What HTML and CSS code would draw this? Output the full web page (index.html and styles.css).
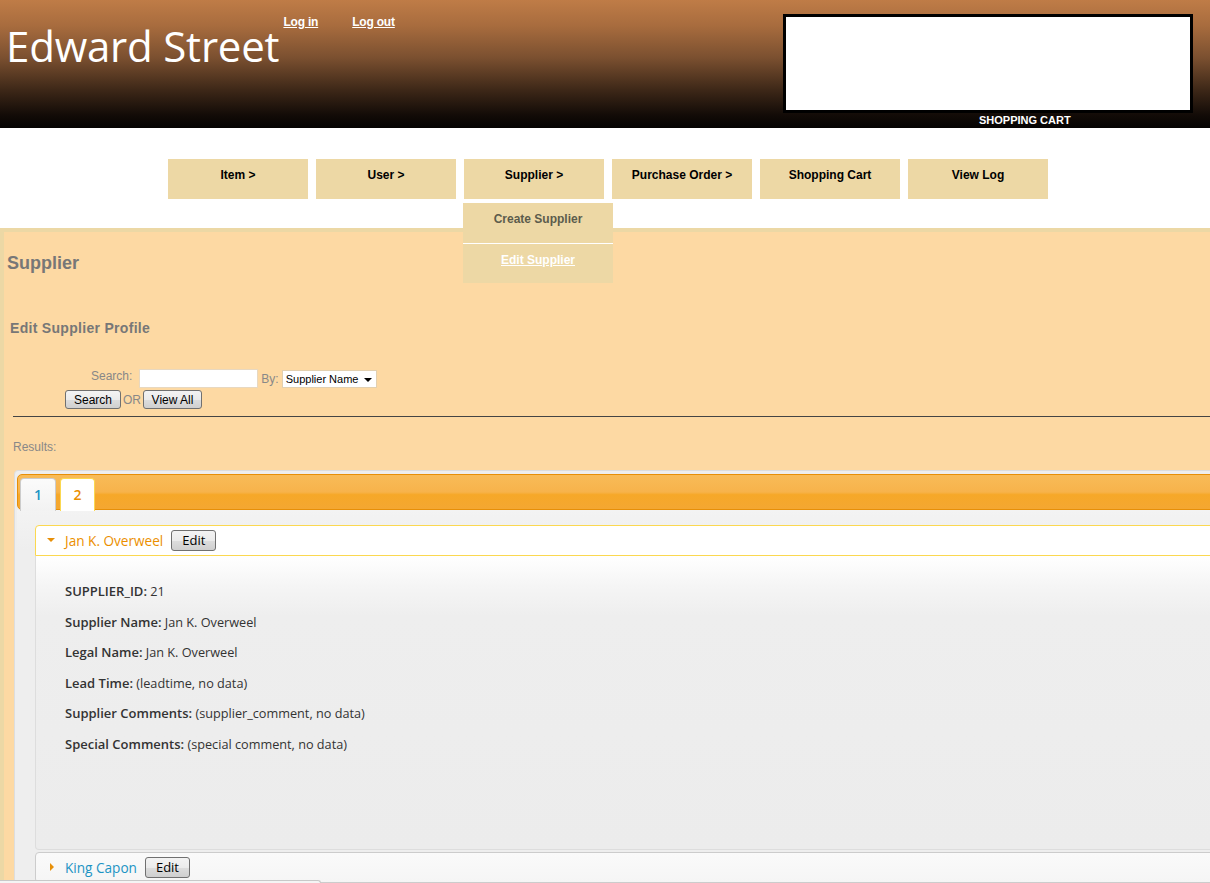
FILE: index.html
```html
<!DOCTYPE html>
<html>
<head>
<meta charset="utf-8">
<title>Edward Street - Edit Supplier</title>
<link rel="stylesheet" href="styles.css">
</head>
<body>
<header class="header">
  <div class="brand">
    <h1 class="title">Edward Street</h1>
    <div class="auth">
      <a href="#" class="auth-link">Log in</a>
      <a href="#" class="auth-link">Log out</a>
    </div>
  </div>
  <div class="cart">
    <div class="cart-box"></div>
    <div class="cart-label">SHOPPING CART</div>
  </div>
</header>

<nav class="menu">
  <div class="menu-item">Item &gt;</div>
  <div class="menu-item">User &gt;</div>
  <div class="menu-item has-sub">Supplier &gt;
    <div class="submenu">
      <div class="submenu-item">Create Supplier</div>
      <div class="submenu-item current"><a href="#">Edit Supplier</a></div>
    </div>
  </div>
  <div class="menu-item">Purchase Order &gt;</div>
  <div class="menu-item">Shopping Cart</div>
  <div class="menu-item">View Log</div>
</nav>

<main class="content">
  <h2 class="page-title">Supplier</h2>
  <h3 class="section-title">Edit Supplier Profile</h3>

  <form class="search">
    <div class="search-row">
      <label class="lbl lbl-search">Search:</label>
      <input type="text" class="search-input">
      <span class="lbl lbl-by">By:</span>
      <div class="select">Supplier Name<span class="select-arrow"></span></div>
    </div>
    <div class="search-row buttons">
      <button type="button" class="btn btn-search">Search</button>
      <span class="lbl lbl-or">OR</span>
      <button type="button" class="btn btn-all">View All</button>
    </div>
  </form>

  <div class="rule"></div>
  <div class="results">Results:</div>

  <div class="tabs">
    <div class="tabs-nav">
      <div class="tab">1</div>
      <div class="tab active">2</div>
    </div>
    <div class="tab-panel">
      <div class="acc-header open">
        <span class="acc-icon down"></span>
        <span class="acc-name">Jan K. Overweel</span>
        <button type="button" class="btn btn-edit">Edit</button>
      </div>
      <div class="acc-content">
        <p><b>SUPPLIER_ID:</b> 21</p>
        <p><b>Supplier Name:</b> Jan K. Overweel</p>
        <p><b>Legal Name:</b> Jan K. Overweel</p>
        <p><b>Lead Time:</b> (leadtime, no data)</p>
        <p><b>Supplier Comments:</b> (supplier_comment, no data)</p>
        <p><b>Special Comments:</b> (special comment, no data)</p>
      </div>
      <div class="acc-header">
        <span class="acc-icon right"></span>
        <span class="acc-name">King Capon</span>
        <button type="button" class="btn btn-edit">Edit</button>
      </div>
    </div>
  </div>
</main>
<div class="status-bubble"></div>
</body>
</html>
```
FILE: styles.css
```css
html, body {
  margin: 0;
  padding: 0;
  overflow: hidden;
  background: #fff;
  font-family: "Liberation Sans", Arial, sans-serif;
}

/* ---------- header ---------- */
.header {
  height: 128px;
  display: flex;
  justify-content: space-between;
  align-items: flex-start;
  background: linear-gradient(to bottom, #bf7c47 0%, #a86c3e 20%, #7b5030 45%, #3e2818 70%, #120b07 90%, #050302 100%);
}
.brand {
  display: flex;
  align-items: flex-start;
  padding-left: 6px;
}
.title {
  margin: 18px 0 0;
  font-family: "Open Sans", sans-serif;
  font-weight: 400;
  font-size: 42px;
  line-height: 56px;
  color: #fff;
  letter-spacing: -0.2px;
}
.auth {
  display: flex;
  gap: 34px;
  margin: 15px 0 0 4px;
}
.auth-link {
  color: #fff;
  font-size: 12px;
  font-weight: bold;
  line-height: 14px;
  letter-spacing: -0.2px;
}
.cart {
  margin: 14px 17px 0 0;
  width: 410px;
}
.cart-box {
  height: 93px;
  background: #fff;
  border: 3px solid #000;
}
.cart-label {
  margin-left: 196px;
  color: #fff;
  font-size: 11px;
  font-weight: bold;
  line-height: 14px;
}

/* ---------- menu ---------- */
.menu {
  height: 100px;
  display: flex;
  gap: 8px;
  padding: 31px 0 0 168px;
  box-sizing: border-box;
}
.menu-item {
  position: relative;
  width: 140px;
  height: 40px;
  box-sizing: border-box;
  padding-top: 9px;
  background: #edd8a5;
  text-align: center;
  font-size: 12px;
  font-weight: bold;
  line-height: 14px;
  color: #000;
}
.submenu {
  position: absolute;
  left: -1px;
  top: 44px;
  width: 150px;
  z-index: 5;
}
.submenu-item {
  height: 40px;
  box-sizing: border-box;
  padding-top: 9px;
  background: #edd8a5;
  color: #5c5c4c;
  font-size: 12px;
  line-height: 14px;
}
.submenu-item.current {
  border-top: 1px solid #fff;
}
.submenu-item.current a {
  color: #fff;
}

/* ---------- content ---------- */
.content {
  min-height: 660px;
  background: #fdd9a3;
  border-top: 4px solid #ecd8a5;
  border-left: 4px solid #ecd8a5;
  padding: 21px 0 0 3px;
}
.page-title {
  margin: 0;
  font-size: 18px;
  line-height: 21px;
  color: #777;
}
.section-title {
  margin: 46px 0 0 3px;
  font-size: 14px;
  line-height: 16px;
  letter-spacing: 0.3px;
  color: #777;
}
.search {
  margin: 33px 0 0 58px;
}
.search-row {
  display: flex;
  align-items: center;
  height: 19px;
}
.search-row.buttons {
  margin-top: 2px;
}
.lbl {
  font-size: 12px;
  color: #888;
}
.lbl-search {
  margin-left: 26px;
  margin-top: -6px;
}
.search-input {
  margin: 0 0 0 7px;
  width: 119px;
  height: 19px;
  box-sizing: border-box;
  border: 1px solid #e8d8c0;
  background: #fff;
  padding: 0;
}
.lbl-by {
  margin-left: 3px;
}
.select {
  position: relative;
  margin-left: 3px;
  width: 95px;
  height: 18px;
  box-sizing: border-box;
  background: #fff;
  border: 1px solid #e2d0b0;
  font-size: 11px;
  line-height: 16px;
  padding-left: 3px;
  color: #000;
}
.select-arrow {
  position: absolute;
  right: 4px;
  top: 7px;
  width: 0;
  height: 0;
  border-left: 4px solid transparent;
  border-right: 4px solid transparent;
  border-top: 4px solid #000;
}
.btn {
  margin: 0;
  height: 19px;
  box-sizing: border-box;
  padding: 0;
  border: 1px solid #707070;
  border-radius: 3px;
  background: linear-gradient(to bottom, #f3f3f3 0%, #ebebeb 50%, #dddddd 51%, #cfcfcf 100%);
  font-family: "Liberation Sans", Arial, sans-serif;
  font-size: 12px;
  color: #000;
}
.btn-search {
  width: 56px;
}
.lbl-or {
  margin: 0 2px 0 2px;
}
.btn-all {
  width: 59px;
}
.rule {
  margin: 7px 0 0 6px;
  height: 1px;
  background: #444;
}
.results {
  margin: 23px 0 0 6px;
  font-size: 12px;
  line-height: 14px;
  color: #888;
}

/* ---------- tabs (jQuery UI lightness) ---------- */
.tabs {
  margin: 16px 0 0 7px;
  width: 1240px;
  padding: 3px 2px;
  border: 1px solid #ddd;
  border-radius: 4px;
  background: #eee;
  font-family: "Open Sans", sans-serif;
  font-size: 13px;
}
.tabs-nav {
  display: flex;
  gap: 4px;
  height: 36px;
  box-sizing: border-box;
  padding: 3px 2px 0;
  border: 1px solid #e78f08;
  border-radius: 5px;
  background: linear-gradient(to bottom, #f8bb58 0%, #f7b34b 50%, #f6a828 58%, #f4a732 100%);
}
.tab {
  width: 36px;
  height: 33px;
  box-sizing: border-box;
  border: 1px solid #ccc;
  border-bottom: 0;
  border-radius: 4px 4px 0 0;
  background: linear-gradient(#fbfbfb, #f2f2f2);
  color: #1c94c4;
  text-align: center;
  line-height: 31px;
  font-size: 14px;
  font-weight: 600;
}
.tab.active {
  width: 35px;
  background: #fff;
  border-color: #fbd850;
  color: #eb8f00;
}
.tab-panel {
  padding: 15px 0 0 18px;
  background: linear-gradient(#f3f3f3, #eeeeee 40px);
}
.acc-header {
  display: flex;
  align-items: center;
  height: 31px;
  box-sizing: border-box;
  border: 1px solid #ccc;
  border-radius: 4px;
  background: linear-gradient(#fafafa, #f5f5f5);
  color: #1c94c4;
  padding-left: 11px;
  margin-top: 2px;
}
.acc-header.open {
  margin-top: 0;
  border-color: #fbd850;
  border-radius: 4px 4px 0 0;
  background: #fff;
  color: #eb8f00;
}
.acc-icon {
  width: 9px;
  height: 9px;
  position: relative;
  margin-right: 9px;
}
.acc-icon.down::before {
  content: "";
  position: absolute;
  left: 0;
  top: 2px;
  border-left: 4px solid transparent;
  border-right: 4px solid transparent;
  border-top: 4px solid #e78f08;
}
.acc-icon.right::before {
  content: "";
  position: absolute;
  left: 3px;
  top: 0;
  border-top: 4px solid transparent;
  border-bottom: 4px solid transparent;
  border-left: 4px solid #e78f08;
}
.acc-name {
  margin-right: 8px;
  font-size: 13.6px;
}
.btn-edit {
  width: 45px;
  height: 21px;
  font-family: "Open Sans", sans-serif;
  font-size: 13px;
  line-height: 17px;
}
.acc-content {
  height: 294px;
  box-sizing: border-box;
  padding: 14px 29px 13px;
  border: 1px solid #ddd;
  border-top: 0;
  border-radius: 0 0 4px 4px;
  background: linear-gradient(#ffffff 0%, #f5f5f5 30px, #eeeeee 60px, #ececec 100%);
  color: #333;
}
.acc-content p {
  margin: 13px 0;
  line-height: 17.5px;
  font-size: 12.7px;
}
.acc-content b {
  font-weight: 600;
  font-size: 13px;
}

.status-bubble {
  position: fixed;
  left: 0;
  bottom: 0;
  width: 320px;
  height: 2px;
  border-top: 1px solid #c8c8c8;
  border-right: 1px solid #c8c8c8;
  border-top-right-radius: 3px;
  background: #f4f4f4;
}
```
